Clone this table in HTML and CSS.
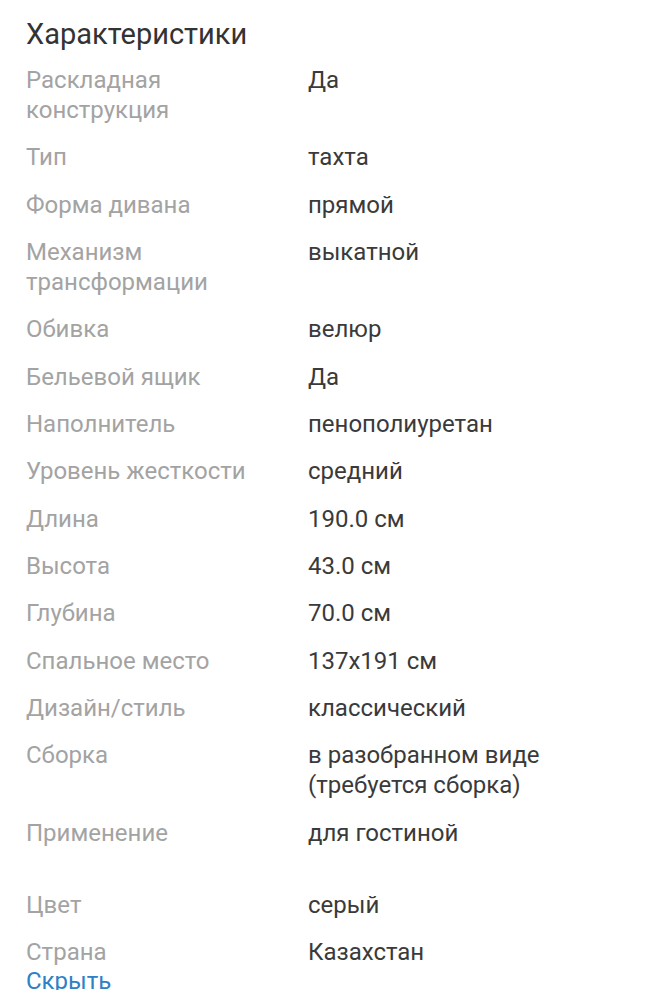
FILE: index.html
```html
<!DOCTYPE html>
<html lang="ru">
<head>
<meta charset="utf-8">
<title>Характеристики</title>
<link rel="stylesheet" href="styles.css">
</head>
<body>
<section class="specs">
  <h2 class="specs-title">Характеристики</h2>
  <dl class="specs-list">
    <div class="row"><dt>Раскладная конструкция</dt><dd>Да</dd></div>
    <div class="row"><dt>Тип</dt><dd>тахта</dd></div>
    <div class="row"><dt>Форма дивана</dt><dd>прямой</dd></div>
    <div class="row"><dt>Механизм трансформации</dt><dd>выкатной</dd></div>
    <div class="row"><dt>Обивка</dt><dd>велюр</dd></div>
    <div class="row"><dt>Бельевой ящик</dt><dd>Да</dd></div>
    <div class="row"><dt>Наполнитель</dt><dd>пенополиуретан</dd></div>
    <div class="row"><dt>Уровень жесткости</dt><dd>средний</dd></div>
    <div class="row"><dt>Длина</dt><dd>190.0 см</dd></div>
    <div class="row"><dt>Высота</dt><dd>43.0 см</dd></div>
    <div class="row"><dt>Глубина</dt><dd>70.0 см</dd></div>
    <div class="row"><dt>Спальное место</dt><dd>137x191 см</dd></div>
    <div class="row"><dt>Дизайн/стиль</dt><dd>классический</dd></div>
    <div class="row"><dt>Сборка</dt><dd>в разобранном виде (требуется сборка)</dd></div>
    <div class="row"><dt>Применение</dt><dd>для гостиной</dd></div>
    <div class="row row-spaced"><dt>Цвет</dt><dd>серый</dd></div>
    <div class="row"><dt>Страна</dt><dd>Казахстан</dd></div>
  </dl>
  <a class="toggle" href="#">Скрыть</a>
</section>
</body>
</html>
```

FILE: styles.css
```css
html, body {
  margin: 0;
  padding: 0;
  background: #ffffff;
}

body {
  font-family: Roboto, "Noto Sans", "Liberation Sans", sans-serif;
  overflow: hidden;
}

.specs {
  padding: 18px 26px 0 26px;
  height: 990px;
  box-sizing: border-box;
  overflow: hidden;
}

.specs-title {
  margin: 0;
  font-size: 29px;
  line-height: 32px;
  font-weight: 400;
  color: #333333;
}

.specs-list {
  margin: 0;
  padding: 0;
}

.row {
  display: grid;
  grid-template-columns: 282px 1fr;
  padding-top: 15px;
  font-size: 24px;
  line-height: 30px;
}

.row + .row {
  padding-top: 17.35px;
}

.row.row-spaced {
  padding-top: 42px;
}

.row dt {
  margin: 0;
  color: #a3a3a3;
  padding-right: 20px;
}

.row dd {
  margin: 0;
  color: #3a3a3a;
}

.toggle {
  display: block;
  font-size: 24px;
  line-height: 30px;
  margin-top: -1px;
  color: #2f80c4;
  text-decoration: none;
}
```
